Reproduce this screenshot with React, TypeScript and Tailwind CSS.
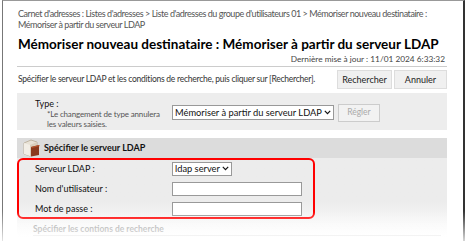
function ServerIcon() {
  return (
    <svg width="20" height="18" viewBox="0 0 20 18">
      <path d="M2 4 L9 1 L15 3 L15 15 L8 17 L2 15 Z" fill="#e8e2d6" stroke="#b8ab96" strokeWidth="0.8" />
      <path d="M8 6 L15 3 L15 15 L8 17 Z" fill="#d9cfbd" />
      <path d="M9 8 L17 6 L17 16 L9 17.5 Z" fill="#8a3a1e" />
      <path d="M9 8 L17 6 L18 7 L10 9 Z" fill="#b5562f" />
      <path d="M2 4 L8 6 L8 17 L2 15 Z" fill="#f2eee6" />
    </svg>
  );
}

function Caret() {
  return (
    <svg width="7" height="5" viewBox="0 0 7 5">
      <path d="M0.8 0.8 L3.5 3.6 L6.2 0.8" fill="none" stroke="#111" strokeWidth="1.2" />
    </svg>
  );
}

export default function App() {
  return (
    <div className="relative w-[467px] h-[241px] overflow-hidden bg-white text-[#222] whitespace-nowrap" style={{ fontFamily: 'Lato, "Noto Sans", sans-serif' }}>
      <div className="absolute left-[2px] top-0 right-[2px] h-[241px] border-l border-t border-r-2 border-l-[#777] border-t-[#999] border-r-[#333]" />
      <div className="pl-[18px] pr-[10px] pt-[8px]">
        <div className="text-[9px] leading-[11px] tracking-[-0.45px] text-[#555]">
          <div>Carnet d'adresses : Listes d'adresses &gt; Liste d'adresses du groupe d'utilisateurs 01 &gt; Mémoriser nouveau destinataire :</div>
          <div>Mémoriser à partir du serveur LDAP</div>
        </div>
        <div className="mt-[6px] h-[16px] text-[13.5px] leading-[16px] font-bold text-black">
          Mémoriser nouveau destinataire : Mémoriser à partir du serveur LDAP
        </div>
        <div className="mt-[2px] pr-[12px] text-right text-[8.3px] leading-[10px] text-[#444]">Dernière mise à jour : 11/01 2024 6:33:32</div>
      </div>
      <div className="mx-[17px] w-[430px] mt-[2px] border-t border-[#ccc]" />
      <div className="ml-[18px] w-[429px] h-[21px] flex items-center justify-between mt-[2px]">
        <div className="text-[8.5px] tracking-[-0.25px] text-[#333]">Spécifier le serveur LDAP et les conditions de recherche, puis cliquer sur [Rechercher].</div>
        <div className="flex gap-[2px] shrink-0">
          <div className="w-[55px] h-[19px] flex items-center justify-center bg-[#f0f0f0] border border-[#ddd] text-[9px] text-[#222]">Rechercher</div>
          <div className="w-[53px] h-[19px] flex items-center justify-center bg-[#f0f0f0] border border-[#ddd] text-[9px] text-[#222]">Annuler</div>
        </div>
      </div>
      <div className="mx-[17px] w-[430px] mt-[3px] h-[37px] bg-[#ededed] flex">
        <div className="w-[155px] pl-[18px] pt-[5px]">
          <div className="text-[9px] leading-[11px] text-[#111]">Type :</div>
          <div className="pl-[12px] text-[8px] leading-[10px] tracking-[-0.15px] text-[#555]">*Le changement de type annulera<br />les valeurs saisies.</div>
        </div>
        <div className="flex items-center gap-[4px] pt-[2px]">
          <div className="h-[15px] px-[2px] flex items-center gap-[2px] bg-white border border-[#999] text-[9.3px] text-[#111]">
            Mémoriser à partir du serveur LDAP
            <Caret />
          </div>
          <div className="h-[18px] w-[42px] flex items-center justify-center bg-[#f2f2f2] border border-[#ccc] text-[8.5px] text-[#aaa]">Régler</div>
        </div>
      </div>
      <div className="mx-[17px] w-[430px] mt-[8px] h-[20px] bg-[#dcdcdc] flex items-center pl-[5px] gap-[2px]">
        <ServerIcon />
        <div className="text-[9px] font-bold text-[#111]">Spécifier le serveur LDAP</div>
      </div>
      <div className="mx-[17px] w-[430px] h-[80px] bg-gradient-to-b from-[#ececec] from-[55%] to-white">
        <div className="w-[298px] h-[61px] border-2 border-[#f00] rounded-[6px] pl-[16px] flex flex-col justify-center gap-[7px]">
          <div className="flex items-center h-[13px]">
            <div className="w-[137px] text-[9px] text-[#111]">Serveur LDAP :</div>
            <div className="h-[14px] px-[2px] flex items-center gap-[2px] bg-white border border-[#999] text-[9.3px] text-[#111]">
              ldap server
              <Caret />
            </div>
          </div>
          <div className="flex items-center h-[13px]">
            <div className="w-[137px] text-[9px] text-[#111]">Nom d'utilisateur :</div>
            <div className="w-[130px] h-[14px] bg-white border border-[#999]" />
          </div>
          <div className="flex items-center h-[13px]">
            <div className="w-[137px] text-[9px] text-[#111]">Mot de passe :</div>
            <div className="w-[130px] h-[14px] bg-white border border-[#999]" />
          </div>
        </div>
        <div className="ml-[16px] mr-[6px] mt-[5px] h-[12px] leading-[11px] border-b border-[#ddd] text-[8.5px] font-bold text-[#999]">Spécifier les contions de recherche</div>
      </div>
      <div className="absolute left-0 right-0 bottom-0 h-[30px] bg-gradient-to-b from-white/0 to-white/80" />
    </div>
  );
}
